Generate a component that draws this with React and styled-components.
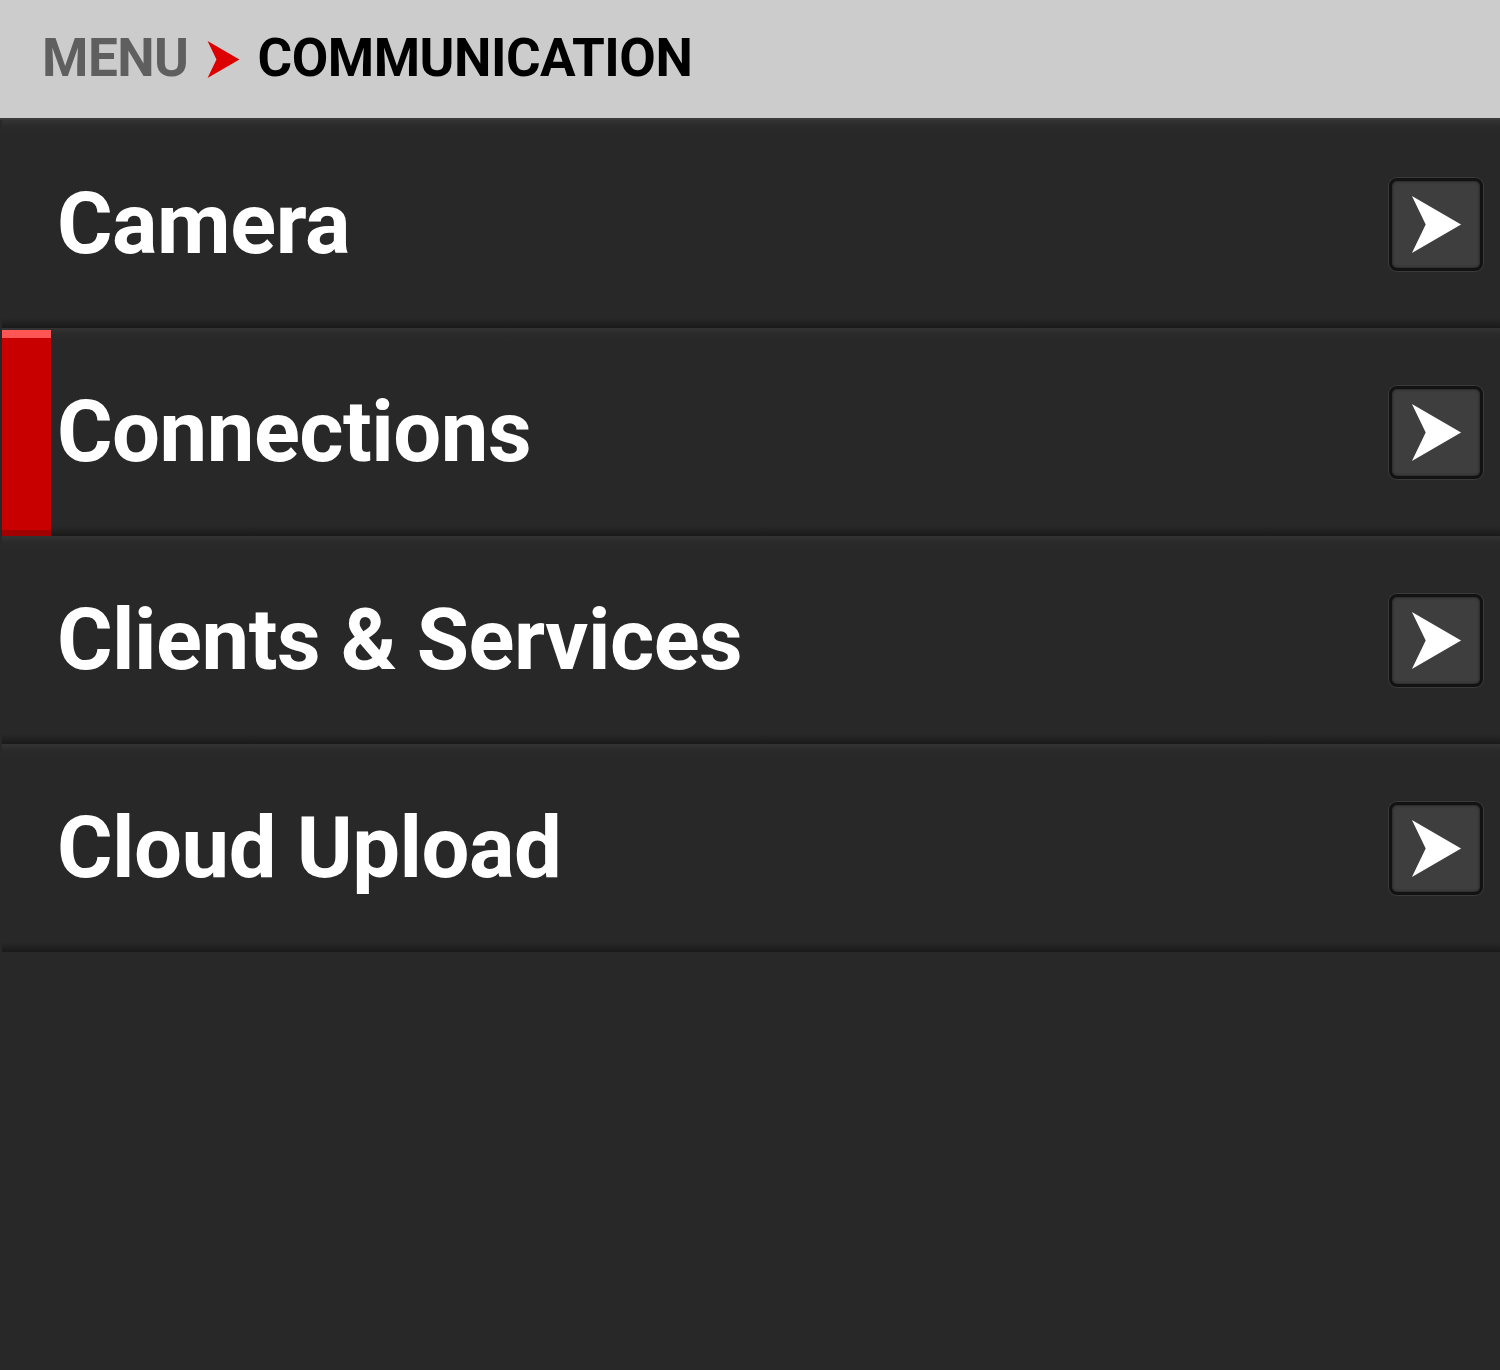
import styled, { createGlobalStyle } from "styled-components";

const Global = createGlobalStyle`
    html, body {
        margin: 0;
        padding: 0;
        background: #282828;
    }
    body {
        font-family: Roboto, "Liberation Sans", sans-serif;
    }
`

const Page = styled.div`
    width: 1500px;
    height: 1370px;
    background: #282828;
    overflow: hidden;
`

const Header = styled.div`
    height: 118px;
    background: #cccccc;
    border-bottom: 2px solid #3a3a3a;
    display: flex;
    align-items: center;
    padding-left: 42px;
    gap: 16px;
    font-weight: 700;
    font-size: 53px;
    letter-spacing: -0.5px;
`

const Crumb = styled.span`
    color: ${props => props.active ? "#000" : "#5f5f5f"};
    line-height: 1;
    margin-top: -2px;
`

const List = styled.div`
    display: flex;
    flex-direction: column;
    padding-left: 2px;
`

const Row = styled.div`
    position: relative;
    height: 208px;
    display: flex;
    align-items: center;
    justify-content: space-between;
    padding: 0 17px 0 55px;
    background: linear-gradient(to bottom, #333 0px, #2a2a2a 6px, #282828 12px, #282828 calc(100% - 10px), #1f1f1f calc(100% - 4px), #1a1a1a 100%);
`

const Marker = styled.div`
    position: absolute;
    left: 0;
    top: 2px;
    bottom: -1px;
    width: 49px;
    background: #c80000;
    border-top: 8px solid #ff5555;
    border-bottom: 7px solid #a00000;
`

const Label = styled.span`
    color: #fff;
    font-size: 85px;
    font-weight: 700;
    letter-spacing: -0.5px;
    line-height: 1;
`

const Button = styled.div`
    width: 88px;
    height: 87px;
    border: 3px solid #121212;
    border-radius: 8px;
    background: #3e3e3e;
    box-shadow: 0 0 0 1px #3a3a3a, inset 0 0 3px rgba(0, 0, 0, 0.6);
    display: flex;
    align-items: center;
    justify-content: center;
`

function Arrow({ size, color }) {
    return (
        <svg width={size} height={size} viewBox="0 0 50 58">
            <polygon points="0,0 50,29 0,58 14,29" fill={color} />
        </svg>
    )
}

const items = ["Camera", "Connections", "Clients & Services", "Cloud Upload"]

export default function App() {
    return (
        <Page>
            <Global />
            <Header>
                <Crumb>MENU</Crumb>
                <Arrow size={37} color="#dd0000" />
                <Crumb active>COMMUNICATION</Crumb>
            </Header>
            <List>
                {items.map((name, i) => (
                    <Row key={name}>
                        {i === 1 && <Marker />}
                        <Label>{name}</Label>
                        <Button>
                            <Arrow size={57} color="#fff" />
                        </Button>
                    </Row>
                ))}
            </List>
        </Page>
    )
}
